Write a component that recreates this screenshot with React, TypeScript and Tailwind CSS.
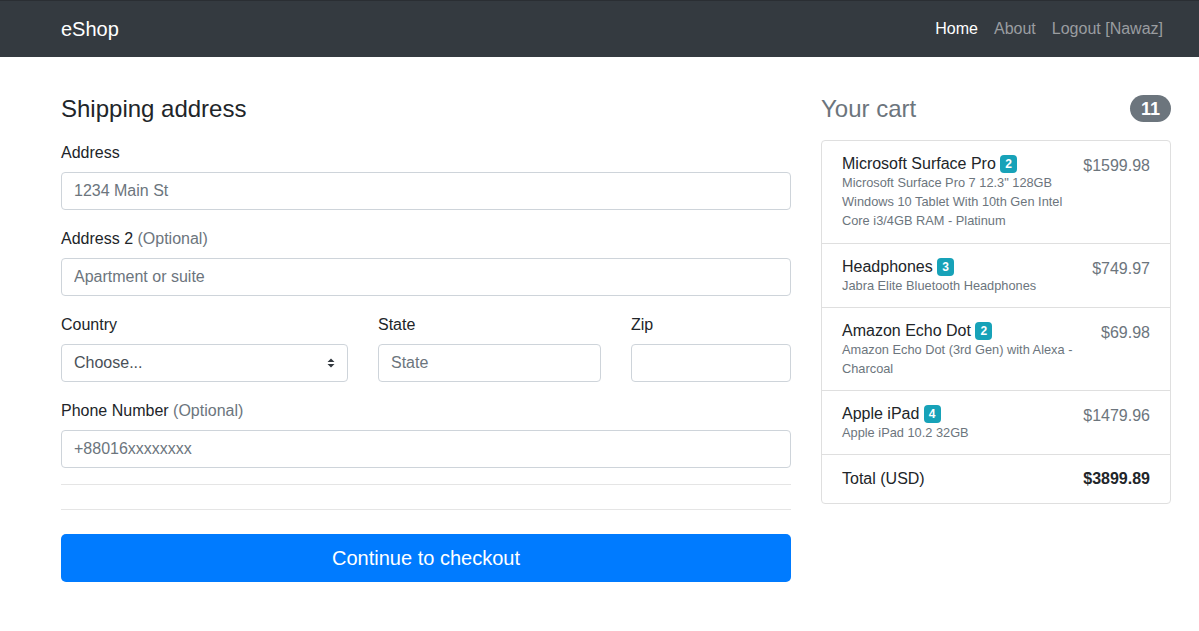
const font = { fontFamily: '"Liberation Sans", Arial, sans-serif' };

type CartItem = {
    name: string;
    qty: number;
    desc: string;
    price: string;
};

const items: CartItem[] = [
    {
        name: 'Microsoft Surface Pro',
        qty: 2,
        desc: 'Microsoft Surface Pro 7 12.3" 128GB Windows 10 Tablet With 10th Gen Intel Core i3/4GB RAM - Platinum',
        price: '$1599.98',
    },
    { name: 'Headphones', qty: 3, desc: 'Jabra Elite Bluetooth Headphones', price: '$749.97' },
    { name: 'Amazon Echo Dot', qty: 2, desc: 'Amazon Echo Dot (3rd Gen) with Alexa - Charcoal', price: '$69.98' },
    { name: 'Apple iPad', qty: 4, desc: 'Apple iPad 10.2 32GB', price: '$1479.96' },
];

const inputCls =
    'block w-full h-[38px] px-3 py-1.5 text-base text-[#495057] bg-white border border-[#ced4da] rounded outline-none placeholder:text-[#6c757d]';

function Label({ children, optional }: { children: string; optional?: boolean }) {
    return (
        <label className="block pt-px mb-[7px] text-base leading-6 text-[#212529]">
            {children}
            {optional && <span className="text-[#6c757d]"> (Optional)</span>}
        </label>
    );
}

function Navbar() {
    return (
        <nav className="bg-[#343a40] border-t border-[#2a2e33] h-[57px] flex items-center">
            <div className="w-[1110px] ml-[61px] flex items-center justify-between">
                <a className="text-xl leading-[30px] text-white">eShop</a>
                <div className="flex">
                    <a className="px-2 text-base leading-6 text-white">Home</a>
                    <a className="px-2 text-base leading-6 text-[#9a9da0]">About</a>
                    <a className="px-2 text-base leading-6 text-[#9a9da0]">Logout [Nawaz]</a>
                </div>
            </div>
        </nav>
    );
}

function ShippingForm() {
    return (
        <div className="w-[730px]">
            <h4 className="text-2xl leading-[29px] text-[#212529] mb-[17px]">Shipping address</h4>

            <div className="mb-4">
                <Label>Address</Label>
                <input className={inputCls} placeholder="1234 Main St" />
            </div>

            <div className="mb-4">
                <Label optional>Address 2</Label>
                <input className={inputCls} placeholder="Apartment or suite" />
            </div>

            <div className="grid grid-cols-[287fr_223fr_160fr] gap-[30px] mb-4">
                <div>
                    <Label>Country</Label>
                    <div className={`${inputCls} flex items-center justify-between`}>
                        <span className="text-[#495057]">Choose...</span>
                        <svg width="8" height="10" viewBox="0 0 8 10">
                            <path d="M4 0.5 L7.5 4 H0.5 Z M4 9.5 L0.5 6 H7.5 Z" fill="#343a40" />
                        </svg>
                    </div>
                </div>
                <div>
                    <Label>State</Label>
                    <input className={inputCls} placeholder="State" />
                </div>
                <div>
                    <Label>Zip</Label>
                    <input className={inputCls} />
                </div>
            </div>

            <div>
                <Label optional>Phone Number</Label>
                <input className={inputCls} placeholder="+88016xxxxxxxx" />
            </div>

            <hr className="mt-4 mb-6 border-t border-[#e5e5e5]" />
            <hr className="mb-6 border-t border-[#e5e5e5]" />

            <button className="w-full h-12 rounded-[5px] bg-[#007bff] text-white text-xl">
                Continue to checkout
            </button>
        </div>
    );
}

function Cart() {
    return (
        <div className="w-[350px]">
            <div className="flex items-center justify-between mb-[17px] h-[29px]">
                <h4 className="text-2xl leading-[29px] text-[#6c757d]">Your cart</h4>
                <span className="inline-flex items-center h-[27px] px-[11px] rounded-full bg-[#6c757d] text-white text-lg font-bold leading-none">
                    11
                </span>
            </div>
            <ul className="border border-[#dfdfdf] rounded">
                {items.map((item) => (
                    <li
                        key={item.name}
                        className="flex justify-between gap-2 px-5 py-3 border-b border-[#dfdfdf]"
                    >
                        <div>
                            <h6 className="pt-px text-base leading-[19px] text-[#212529]">
                                {item.name}{' '}
                                <span className="inline-block align-[1px] rounded bg-[#17a2b8] text-white text-xs font-bold leading-none px-[5px] py-[3px]">
                                    {item.qty}
                                </span>
                            </h6>
                            <small className="block text-[12.8px] leading-[19.2px] text-[#6c757d]">{item.desc}</small>
                        </div>
                        <span className="pt-px text-base leading-6 text-[#6c757d] whitespace-nowrap">{item.price}</span>
                    </li>
                ))}
                <li className="flex justify-between px-5 py-3">
                    <span className="text-base leading-6 text-[#212529]">Total (USD)</span>
                    <strong className="text-base leading-6 text-[#212529] font-bold">$3899.89</strong>
                </li>
            </ul>
        </div>
    );
}

export default function App() {
    return (
        <div className="min-h-[631px] bg-white" style={font}>
            <Navbar />
            <main className="ml-[61px] pt-[37px] flex gap-[30px]">
                <ShippingForm />
                <Cart />
            </main>
        </div>
    );
}
